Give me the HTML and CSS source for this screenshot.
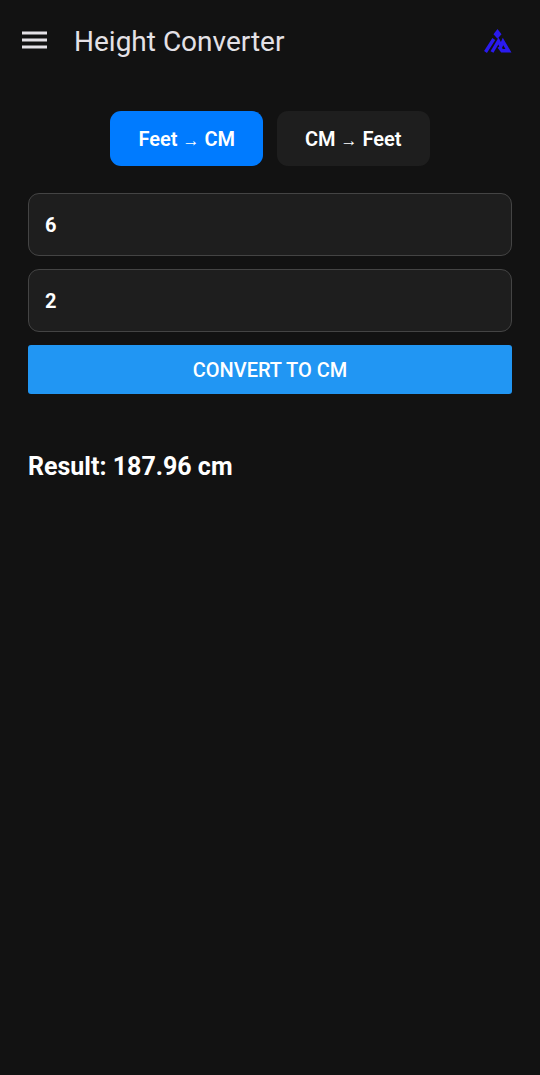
FILE: index.html
```html
<!DOCTYPE html>
<html lang="en">
<head>
<meta charset="utf-8">
<meta name="viewport" content="width=device-width, initial-scale=1">
<title>Height Converter</title>
<link rel="stylesheet" href="styles.css">
</head>
<body>
<header class="app-bar">
  <button class="icon-button" type="button" aria-label="Menu">
    <svg class="menu-icon" viewBox="0 0 25 21" aria-hidden="true"><path d="M0 2h25M0 9h25M0 16h25" stroke="#e4e1e6" stroke-width="2.8"/></svg>
  </button>
  <h1 class="app-title">Height Converter</h1>
  <svg class="logo" viewBox="0 0 28 24" aria-hidden="true"><path fill="#2a1aee" d="M13.500 -1l4 5.200-4 4.600-4-4.600z"/><path d="M1.500 22L9.800 9M8 22l6.500-11 2.500 5 2-4.500L24.500 20.800h-6.500l-3-4" fill="none" stroke="#2a1aee" stroke-width="3.400"/></svg>
</header>
<main class="content">
  <div class="modes">
    <button class="mode mode-active" type="button" aria-pressed="true">Feet <span class="arrow">→</span> CM</button>
    <button class="mode" type="button" aria-pressed="false">CM <span class="arrow">→</span> Feet</button>
  </div>
  <form class="form">
    <input class="field" type="text" inputmode="decimal" aria-label="Feet" value="6">
    <input class="field" type="text" inputmode="decimal" aria-label="Inches" value="2">
    <button class="submit" type="button">CONVERT TO CM</button>
  </form>
  <output class="result">Result: 187.96 cm</output>
</main>
</body>
</html>
```
FILE: styles.css
```css
* { box-sizing: border-box; }
body {
  margin: 0;
  min-height: 100vh;
  background: #121212;
  color: #fff;
  font-family: Roboto, sans-serif;
}
button, input { font: inherit; color: inherit; }
.app-bar {
  display: flex;
  align-items: center;
  height: 83px;
  padding: 0 28px 0 22px;
}
.icon-button { display: flex; padding: 0; border: 0; background: none; }
.menu-icon { display: block; width: 25px; height: 21px; }
.app-title {
  flex: 1;
  margin: 0 0 0 27px;
  font-size: 28px;
  line-height: 32px;
  font-weight: 400;
  color: #e4e1e6;
}
.logo { width: 28px; height: 24px; overflow: visible; }
.content { padding: 28px; }
.modes { display: flex; justify-content: center; gap: 14px; }
.mode {
  height: 55px;
  padding: 1px 28px 0;
  border: 0;
  border-radius: 11px;
  background: #1e1e1e;
  font-size: 20px;
  font-weight: 600;
}
.mode-active { background: #007bff; }
.arrow { font-size: 17px; font-weight: 700; }
.form { display: grid; gap: 13px; margin-top: 27px; }
.field {
  width: 100%;
  height: 63px;
  padding: 1px 16px 0;
  border: 1px solid #444;
  border-radius: 11px;
  background: #1e1e1e;
  font-size: 20px;
  font-weight: 700;
}
.submit {
  height: 49px;
  padding: 1px 16px 0;
  border: 0;
  border-radius: 3px;
  background: #2196f3;
  font-size: 20px;
  font-weight: 500;
}
.result {
  display: block;
  margin-top: 58px;
  font-size: 25px;
  line-height: 30px;
  font-weight: 700;
}
```
